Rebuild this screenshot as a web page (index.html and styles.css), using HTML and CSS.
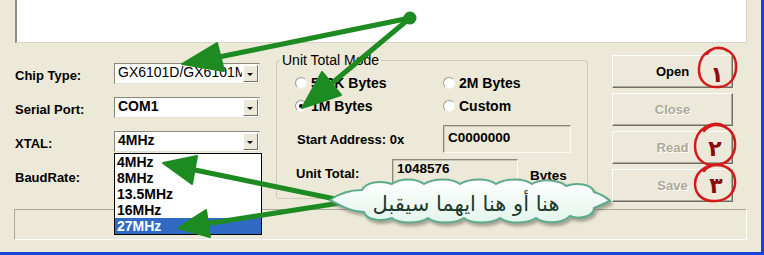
FILE: index.html
```html
<!DOCTYPE html>
<html lang="en">
<head>
  <meta charset="UTF-8" />
  <title>Loader</title>
  <link rel="stylesheet" href="styles.css">
</head>
<body>
  <div class="window">
    <div class="log"></div>

    <div class="main">
      <div class="fields">
        <label class="lbl">Chip Type:</label>
        <div class="combo"><span class="combo-text plain">GX6101D/GX6101M</span><span class="combo-btn"></span></div>

        <label class="lbl">Serial Port:</label>
        <div class="combo"><span class="combo-text">COM1</span><span class="combo-btn"></span></div>

        <label class="lbl">XTAL:</label>
        <div class="combo"><span class="combo-text">4MHz</span><span class="combo-btn"></span></div>

        <label class="lbl">BaudRate:</label>
        <div class="combo"><span class="combo-text"></span><span class="combo-btn"></span></div>
      </div>

      <fieldset class="mode">
        <legend>Unit Total Mode</legend>
        <div class="radios">
          <span class="radio"><i class="dot"></i>512K Bytes</span>
          <span class="radio"><i class="dot"></i>2M Bytes</span>
          <span class="radio"><i class="dot on"></i>1M Bytes</span>
          <span class="radio"><i class="dot"></i>Custom</span>
        </div>
        <div class="addr-row">
          <span class="field-lbl addr-lbl">Start Address: 0x</span>
          <div class="edit addr">C0000000</div>
        </div>
        <div class="total-row">
          <span class="field-lbl total-lbl">Unit Total:</span>
          <div class="edit total">1048576</div>
          <span class="unit">Bytes</span>
        </div>
      </fieldset>

      <div class="buttons">
        <button class="btn">Open</button>
        <button class="btn" disabled>Close</button>
        <button class="btn" disabled>Read</button>
        <button class="btn" disabled>Save</button>
      </div>
    </div>

    <div class="status"></div>

    <!-- open list of the XTAL combo -->
    <ul class="droplist">
      <li>4MHz</li>
      <li>8MHz</li>
      <li>13.5MHz</li>
      <li>16MHz</li>
      <li class="sel">27MHz</li>
    </ul>

    <!-- hand drawn notes on top of the dialog -->
    <svg class="notes" width="764" height="255" viewBox="0 0 764 255">
      <defs>
        <linearGradient id="cloudFill" x1="0" y1="0" x2="0" y2="1">
          <stop offset="0" stop-color="#ffffff"/>
          <stop offset="1" stop-color="#e3f5ec"/>
        </linearGradient>
        <filter id="shadow" x="-10%" y="-30%" width="120%" height="170%">
          <feDropShadow dx="2" dy="3" stdDeviation="1.5" flood-color="#6d6a5c" flood-opacity="0.55"/>
        </filter>
      </defs>

      <g stroke="#1e8a22" stroke-width="5" stroke-linecap="round" fill="#1e8a22">
        <line x1="410" y1="18" x2="219" y2="57"/>
        <polygon points="182,64 217,43 224,71" stroke-width="2" stroke-linejoin="round"/>
        <line x1="410" y1="18" x2="331" y2="84"/>
        <polygon points="302,108 322,72 341,95" stroke-width="2" stroke-linejoin="round"/>
        <circle cx="410" cy="18" r="4"/>
        <line x1="340" y1="200" x2="195" y2="170"/>
        <polygon points="163,163 197,156 192,184" stroke-width="2" stroke-linejoin="round"/>
        <line x1="340" y1="203" x2="205" y2="224"/>
        <polygon points="178,228 206,210 210,237" stroke-width="2" stroke-linejoin="round"/>
      </g>

      <path class="cloud" filter="url(#shadow)" d="M 330,200
        C 340,193 350,190 362,190 C 366,182 380,180 392,184
        C 400,178 416,178 424,184 C 434,178 452,178 460,184
        C 470,178 488,178 496,184 C 506,178 524,178 532,184
        C 542,178 560,180 566,186 C 576,182 592,184 594,192
        C 600,194 606,197 610,201 C 604,204 598,206 594,208
        C 594,216 580,220 570,216 C 562,224 544,224 536,218
        C 526,224 508,224 500,218 C 490,224 472,224 464,218
        C 454,224 436,224 428,218 C 418,224 400,224 392,218
        C 382,222 366,220 364,212 C 352,212 342,206 330,200 Z"/>
      <text class="cloud-text" x="466" y="211" text-anchor="middle" direction="rtl">هنا أو هنا ايهما سيقبل</text>

      <g class="marks">
        <path d="M 728,51 C 716,43 700,52 699,68 C 698,82 708,88 719,87 C 731,86 737,76 736,64 C 735,54 727,47 716,48 C 712,49 709,51 707,54"/>
        <path d="M 726,127 C 712,118 695,130 695,146 C 695,160 705,166 716,165 C 729,164 736,154 735,142 C 734,131 725,124 714,125 C 710,126 706,128 704,131"/>
        <path d="M 726,167 C 712,160 695,170 695,184 C 695,196 705,202 716,201 C 729,200 736,191 735,180 C 734,170 725,164 714,165 C 710,166 706,168 704,171"/>
      </g>
      <g class="digits">
        <text x="717" y="82" text-anchor="middle">١</text>
        <text x="715" y="156" text-anchor="middle">٢</text>
        <text x="716" y="193" text-anchor="middle">٣</text>
      </g>
    </svg>
  </div>
</body>
</html>
```

FILE: styles.css
```css
body {
  margin: 0;
  background: #ece9d8;
}

.window {
  position: relative;
  width: 764px;
  height: 255px;
  box-sizing: border-box;
  background: #ece9d8;
  border-right: 3px solid #1a44d4;
  border-bottom: 3px solid #1a44d4;
  overflow: hidden;
  font-family: "Liberation Sans", Arial, sans-serif;
  font-size: 13px;
  color: #000;
}

.log {
  margin-left: 15px;
  width: 732px;
  height: 43px;
  box-sizing: border-box;
  background: #fff;
  border-left: 2px solid #8f8d80;
  border-right: 1px solid #d6d3c4;
  border-bottom: 1px solid #d6d3c4;
}

.main {
  display: flex;
  align-items: flex-start;
  height: 166px;
}

/* left column: label + combo rows */
.fields {
  margin: 20px 0 0 15px;
  display: grid;
  grid-template-columns: 99px 146px;
  grid-auto-rows: 21px;
  row-gap: 13px;
}

.lbl {
  align-self: end;
  line-height: 16px;
  font-weight: bold;
}

.combo {
  display: flex;
  box-sizing: border-box;
  height: 21px;
  background: #fff;
  border: 1px solid;
  border-color: #8a887b #e4e1d3 #e4e1d3 #8a887b;
}

.combo-text {
  flex: 1;
  overflow: hidden;
  white-space: nowrap;
  padding-left: 3px;
  line-height: 16px;
  font-size: 14px;
  font-weight: bold;
}

.combo-text.plain {
  font-weight: normal;
}

.combo-btn {
  position: relative;
  width: 15px;
  margin: 1px;
  box-sizing: border-box;
  background: #ece9d8;
  border: 1px solid;
  border-color: #fff #716f64 #716f64 #fff;
}

.combo-btn::after {
  content: "";
  position: absolute;
  left: 3px;
  top: 7px;
  border-left: 3px solid transparent;
  border-right: 3px solid transparent;
  border-top: 3px solid #000;
}

/* group box */
.mode {
  margin: 10px 0 0 16px;
  width: 312px;
  height: 146px;
  box-sizing: border-box;
  padding: 7px 0 0 18px;
  border: 1px solid #cfccbc;
  border-radius: 3px;
}

.mode legend {
  margin-left: -15px;
  padding: 0 2px;
  line-height: 14px;
  font-size: 14px;
}

.radios {
  display: grid;
  grid-template-columns: 148px 120px;
  grid-auto-rows: 17px;
  row-gap: 6px;
}

.radio {
  display: flex;
  align-items: center;
  gap: 4px;
  font-size: 14px;
  font-weight: bold;
}

.dot {
  position: relative;
  width: 12px;
  height: 12px;
  box-sizing: border-box;
  border-radius: 50%;
  background: #fff;
  border: 1px solid;
  border-color: #9d9b8e #f4f3ee #f4f3ee #9d9b8e;
}

.dot.on::after {
  content: "";
  position: absolute;
  left: 3px;
  top: 3px;
  width: 4px;
  height: 4px;
  border-radius: 50%;
  background: #000;
}

.addr-row,
.total-row {
  display: flex;
  align-items: center;
}

.addr-row {
  margin-top: 11px;
}

.total-row {
  margin-top: 6px;
}

.field-lbl {
  font-weight: bold;
}

.addr-lbl {
  width: 148px;
  padding-left: 2px;
  box-sizing: border-box;
}

.total-lbl {
  width: 97px;
  padding-left: 1px;
  box-sizing: border-box;
}

.edit {
  height: 28px;
  box-sizing: border-box;
  padding: 4px 0 0 4px;
  line-height: 16px;
  font-size: 13.5px;
  font-weight: bold;
  border: 1px solid;
  border-color: #8a887b #fbfaf5 #fbfaf5 #8a887b;
  box-shadow: inset 1px 1px #c9c6b6;
}

.addr {
  width: 128px;
}

.total {
  width: 126px;
  padding-top: 1px;
}

.unit {
  margin-left: 12px;
  padding-top: 5px;
  font-size: 13.5px;
  font-weight: bold;
}

/* right column buttons */
.buttons {
  margin: 12px 0 0 24px;
  display: flex;
  flex-direction: column;
  gap: 5px;
}

.btn {
  width: 121px;
  height: 33px;
  box-sizing: border-box;
  padding: 0;
  background: #ede9da;
  border: 1px solid;
  border-color: #fff #716f64 #716f64 #fff;
  box-shadow: inset -1px -1px #aca899;
  font-family: "Liberation Sans", Arial, sans-serif;
  font-size: 13px;
  font-weight: bold;
  color: #000;
}

.btn:disabled {
  color: #aca899;
  text-shadow: 1px 1px #fff;
}

.status {
  margin: 0 0 0 14px;
  width: 733px;
  height: 31px;
  box-sizing: border-box;
  border: 1px solid;
  border-color: #aca899 #fff #fff #aca899;
}

/* open drop down list */
.droplist {
  position: absolute;
  left: 114px;
  top: 153px;
  width: 148px;
  margin: 0;
  padding: 0;
  list-style: none;
  box-sizing: border-box;
  background: #fff;
  border: 1px solid #000;
}

.droplist li {
  height: 16px;
  padding-left: 2px;
  line-height: 16px;
  font-size: 14px;
  font-weight: bold;
}

.droplist .sel {
  background: #316ac5;
  color: #fff;
}

.notes {
  position: absolute;
  left: 0;
  top: 0;
  pointer-events: none;
}

.cloud {
  fill: url(#cloudFill);
  stroke: #5cab8c;
  stroke-width: 2;
}

.cloud-text {
  font-family: "DejaVu Sans", sans-serif;
  font-size: 21px;
  fill: #1d3a2c;
}

.marks path {
  fill: none;
  stroke: #d21a1a;
  stroke-width: 2.5;
  stroke-linecap: round;
}

.digits text {
  font-family: "DejaVu Sans", sans-serif;
  font-size: 22px;
  font-weight: bold;
  fill: #8a0b0b;
}
```
